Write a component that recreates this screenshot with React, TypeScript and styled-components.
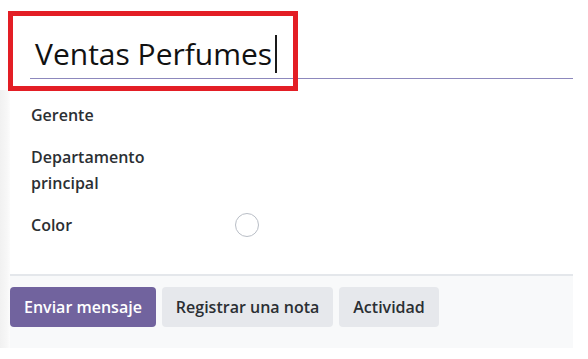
import styled, { createGlobalStyle } from 'styled-components';

const GlobalStyle = createGlobalStyle`
  body {
    margin: 0;
    background: #fff;
    font-family: 'Open Sans', 'Noto Sans', sans-serif;
    color: #212529;
  }
`;

const Page = styled.div`
  position: relative;
  width: 588px;
  height: 359px;
  background: #fff;
  overflow: hidden;
`;

const TitleBar = styled.div`
  box-sizing: border-box;
  height: 90px;
  padding: 35px 15px 0 30px;
`;

const TitleField = styled.div`
  padding-left: 5px;
  padding-bottom: 5px;
  border-bottom: 1px solid #8d88bd;
  font-size: 30px;
  line-height: 36px;
  color: #111;
  white-space: nowrap;
`;

const Caret = styled.span`
  display: inline-block;
  width: 1.5px;
  height: 38px;
  margin-left: 3px;
  background: #1a1a1a;
  vertical-align: -8px;
`;

const Highlight = styled.div`
  position: absolute;
  left: 8px;
  top: 11px;
  width: 290px;
  height: 80px;
  box-sizing: border-box;
  border: 5px solid #e31e25;
  pointer-events: none;
`;

const Body = styled.div`
  display: flex;
  height: 258px;
`;

const Gutter = styled.div`
  width: 10px;
  background: linear-gradient(to right, #f1f1f1, #f7f7f7 70%, #fcfcfc);
`;

const Content = styled.div`
  width: 563px;
  display: flex;
  flex-direction: column;
`;

const Form = styled.div`
  display: grid;
  grid-template-columns: 204px 1fr;
  row-gap: 16px;
  padding: 12px 0 36px 21px;
`;

const Label = styled.div`
  font-size: 16px;
  font-weight: 600;
  line-height: 26px;
  color: #2b2f33;
`;

const Value = styled.div`
  display: flex;
  align-items: center;
  min-height: 26px;
`;

const ColorDot = styled.span`
  width: 24px;
  height: 24px;
  box-sizing: border-box;
  border-radius: 50%;
  border: 1.5px solid #b9bec6;
  background: #fff;
`;

const Chatter = styled.div`
  flex: 1;
  display: flex;
  gap: 6px;
  align-items: flex-start;
  padding-top: 11px;
  background: #f8f9fa;
  border-top: 2px solid #e4e7eb;
`;

const Button = styled.button<{ $primary?: boolean }>`
  height: 40px;
  padding: 0 14px;
  border: none;
  border-radius: 4px;
  font-family: inherit;
  font-size: 16px;
  font-weight: 600;
  background: ${(p) => (p.$primary ? '#71639e' : '#e6e8ec')};
  color: ${(p) => (p.$primary ? '#fff' : '#2b2f33')};
  cursor: pointer;
`;

export default function App() {
  return (
    <Page>
      <GlobalStyle />
      <TitleBar>
        <TitleField>
          Ventas Perfumes
          <Caret />
        </TitleField>
      </TitleBar>
      <Body>
        <Gutter />
        <Content>
          <Form>
            <Label>Gerente</Label>
            <Value />
            <Label>
              Departamento
              <br />
              principal
            </Label>
            <Value />
            <Label>Color</Label>
            <Value>
              <ColorDot />
            </Value>
          </Form>
          <Chatter>
            <Button $primary>Enviar mensaje</Button>
            <Button>Registrar una nota</Button>
            <Button>Actividad</Button>
          </Chatter>
        </Content>
      </Body>
      <Highlight />
    </Page>
  );
}
